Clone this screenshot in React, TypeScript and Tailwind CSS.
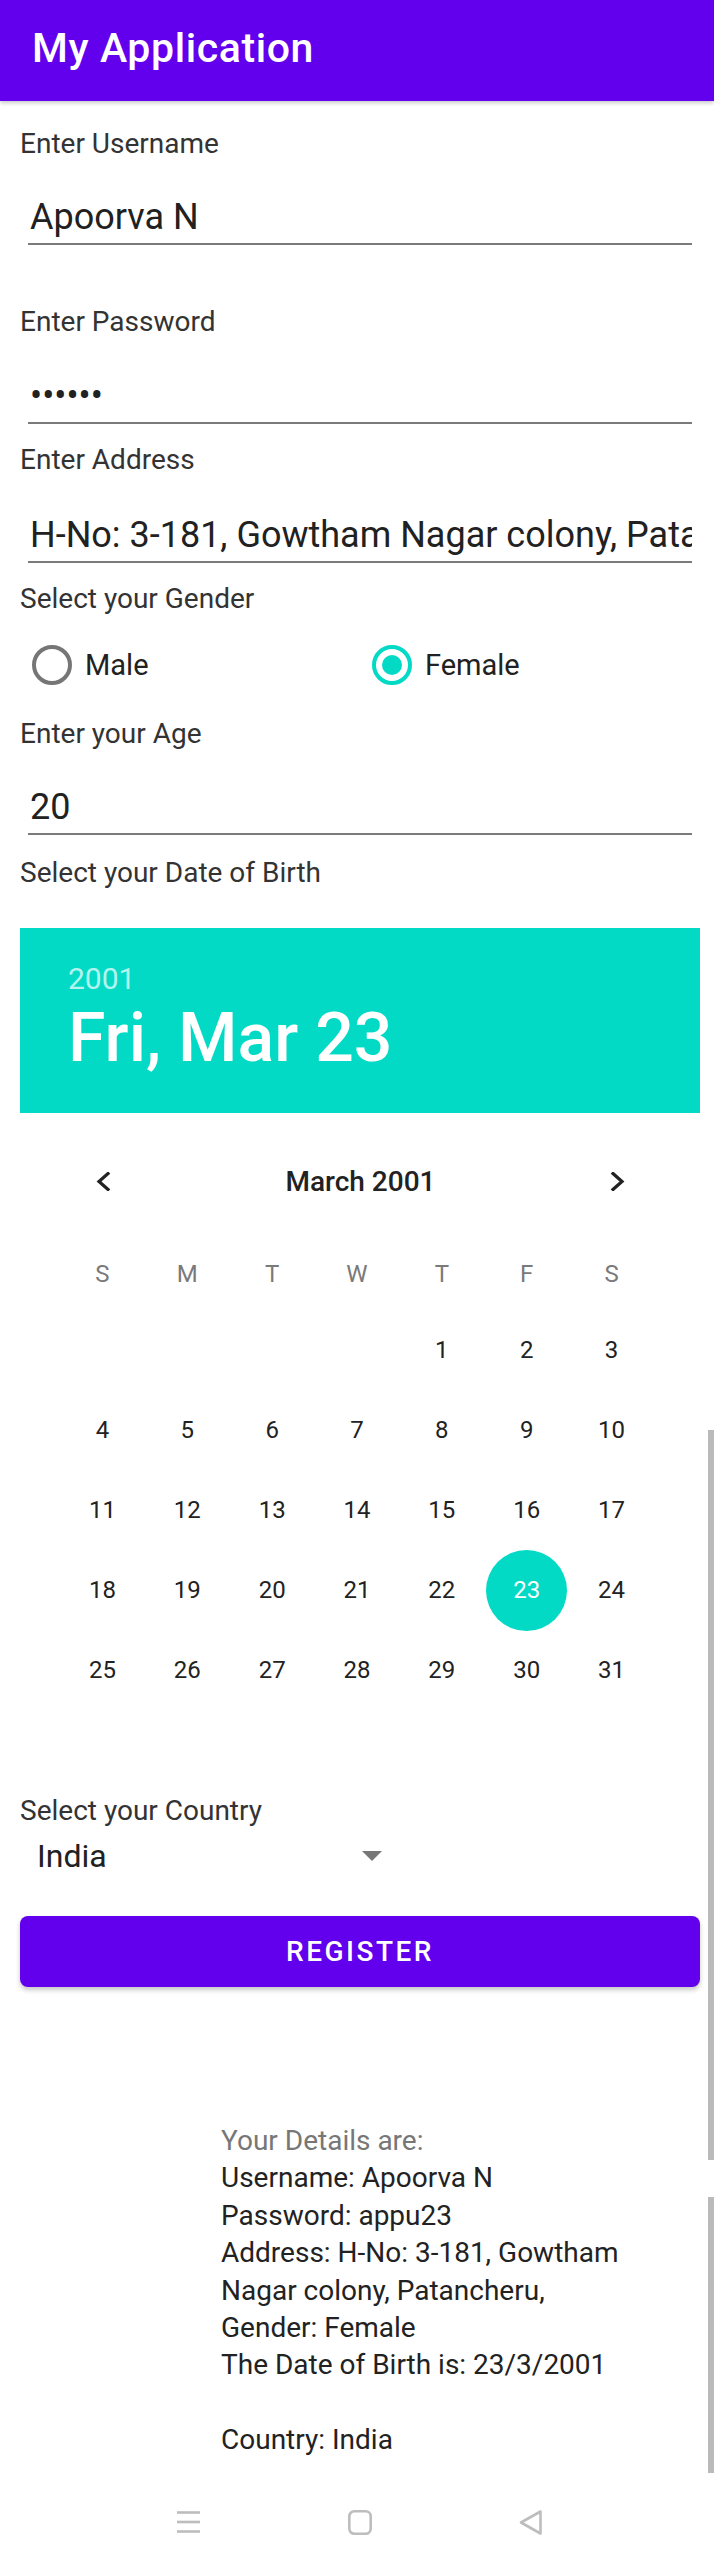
import React from "react";

const Label = ({ children, className = "" }: { children: React.ReactNode; className?: string }) => (
  <div className={`ml-[20px] text-[28px] leading-[33px] text-[#333333] ${className}`}>{children}</div>
);

const Input = ({ children, className = "" }: { children: React.ReactNode; className?: string }) => (
  <div className={`ml-[28px] w-[664px] overflow-hidden whitespace-nowrap border-b-2 border-[#7a7a7a] pb-[5px] ${className}`}>
    <div className="pl-[2px] text-[36px] leading-[42px] text-[#212121]">{children}</div>
  </div>
);

const Chevron = ({ dir }: { dir: "left" | "right" }) => (
  <svg width="16" height="19" viewBox="0 0 16 19" fill="none">
    <polyline
      points={dir === "left" ? "13,1.5 4,9.5 13,17.5" : "3,1.5 12,9.5 3,17.5"}
      stroke="#222222"
      strokeWidth="3.2"
      strokeLinecap="square"
      strokeLinejoin="miter"
    />
  </svg>
);

const weekdays = ["S", "M", "T", "W", "T", "F", "S"];
const days: (number | null)[] = [null, null, null, null, ...Array.from({ length: 31 }, (_, i) => i + 1)];
while (days.length % 7 !== 0) days.push(null);

export default function App() {
  return (
    <div className="relative flex h-[2562px] w-[714px] flex-col overflow-hidden bg-white font-['Roboto',sans-serif]">
      {/* App bar */}
      <div className="relative z-10 h-[101px] bg-[#6200EE] shadow-[0_2px_4px_rgba(0,0,0,0.22)]">
        <div className="pl-[32px] pt-[25px] text-[41px] font-medium leading-[47px] tracking-[0.6px] text-white">My Application</div>
      </div>

      <Label className="mt-[26px]">Enter Username</Label>
      <Input className="mt-[36px]">Apoorva N</Input>

      <Label className="mt-[60px]">Enter Password</Label>
      <Input className="mt-[37px]">••••••</Input>

      <Label className="mt-[19px]">Enter Address</Label>
      <Input className="mt-[38px]">H-No: 3-181, Gowtham Nagar colony, Patancheru,</Input>

      <Label className="mt-[19px]">Select your Gender</Label>
      <div className="ml-[20px] mt-[18px] grid h-[64px] w-[680px] grid-cols-2">
        <div className="flex items-center pl-[12px]">
          <div className="h-[40px] w-[40px] rounded-full border-[4px] border-[#767676]" />
          <span className="ml-[13px] text-[29px] leading-[34px] text-[#212121]">Male</span>
        </div>
        <div className="flex items-center pl-[12px]">
          <div className="flex h-[40px] w-[40px] items-center justify-center rounded-full border-[4px] border-[#03DAC5]">
            <div className="h-[20px] w-[20px] rounded-full bg-[#03DAC5]" />
          </div>
          <span className="ml-[13px] text-[29px] leading-[34px] text-[#212121]">Female</span>
        </div>
      </div>

      <Label className="mt-[20px]">Enter your Age</Label>
      <Input className="mt-[36px]">20</Input>

      <Label className="mt-[21px]">Select your Date of Birth</Label>

      {/* Date picker header */}
      <div className="ml-[20px] mt-[39px] h-[185px] w-[680px] bg-[#03DAC5] pl-[48px] pt-[33px]">
        <div className="text-[30px] leading-[35px] text-[#b3f4ee]">2001</div>
        <div className="mt-[2px] text-[68px] font-medium leading-[80px] text-white">Fri, Mar 23</div>
      </div>

      {/* Month row */}
      <div className="mt-[44px] flex h-[48px] items-center">
        <div className="ml-[95px]">
          <Chevron dir="left" />
        </div>
        <div className="flex-1 text-center text-[28px] font-medium leading-[33px] text-[#222222]">March 2001</div>
        <div className="mr-[88px]">
          <Chevron dir="right" />
        </div>
      </div>

      {/* Weekdays */}
      <div className="ml-[60px] mt-[45px] grid h-[47px] w-[594px] grid-cols-7">
        {weekdays.map((d, i) => (
          <div key={i} className="flex items-center justify-center text-[24px] leading-[28px] text-[#7a7a7a]">
            {d}
          </div>
        ))}
      </div>

      {/* Days */}
      <div className="ml-[60px] mt-[13px] grid w-[594px] grid-cols-7">
        {days.map((d, i) => (
          <div key={i} className="flex h-[80px] items-center justify-center">
            {d === 23 ? (
              <div className="flex h-[81px] w-[81px] shrink-0 items-center justify-center rounded-full bg-[#03DAC5] text-[24px] leading-[28px] text-white">
                23
              </div>
            ) : d ? (
              <span className="text-[24px] leading-[28px] text-[#222222]">{d}</span>
            ) : null}
          </div>
        ))}
      </div>

      <Label className="mt-[84px]">Select your Country</Label>
      <div className="ml-[20px] mt-[10px] flex h-[38px] w-[386px] items-center">
        <span className="pl-[17px] text-[32px] leading-[38px] text-[#212121]">India</span>
        <svg className="ml-auto mr-[24px]" width="20" height="10" viewBox="0 0 20 10">
          <polygon points="0,0 20,0 10,10" fill="#777777" />
        </svg>
      </div>

      <div className="ml-[20px] mt-[41px] flex h-[71px] w-[680px] items-center justify-center rounded-[8px] bg-[#6200EE] shadow-[0_3px_5px_rgba(0,0,0,0.22)]">
        <span className="text-[28px] font-medium leading-[33px] tracking-[2.5px] text-white">REGISTER</span>
      </div>

      {/* Details */}
      <div className="ml-[221px] mt-[135px] text-[28px] leading-[37.4px] text-[#222222]">
        <div className="text-[#777777]">Your Details are:</div>
        <div>Username: Apoorva N</div>
        <div>Password: appu23</div>
        <div>Address: H-No: 3-181, Gowtham</div>
        <div>Nagar colony, Patancheru,</div>
        <div>Gender: Female</div>
        <div>The Date of Birth is: 23/3/2001</div>
        <div>&nbsp;</div>
        <div>Country: India</div>
      </div>

      {/* Navigation bar */}
      <div className="mt-auto flex h-[80px] items-center pl-[177px]">
        <svg width="23" height="22" viewBox="0 0 23 22" fill="none">
          <line x1="0" y1="1.5" x2="23" y2="1.5" stroke="#bdbdbd" strokeWidth="2.6" />
          <line x1="0" y1="11" x2="23" y2="11" stroke="#bdbdbd" strokeWidth="2.6" />
          <line x1="0" y1="20.5" x2="23" y2="20.5" stroke="#bdbdbd" strokeWidth="2.6" />
        </svg>
        <svg className="ml-[148px]" width="24" height="25" viewBox="0 0 24 25" fill="none">
          <rect x="1.3" y="1.3" width="21.4" height="22.4" rx="5" stroke="#bdbdbd" strokeWidth="2.6" />
        </svg>
        <svg className="ml-[146px]" width="25" height="27" viewBox="0 0 25 27" fill="none">
          <path d="M22.5 2.5 L3 13.5 L22.5 24.5 Z" stroke="#bdbdbd" strokeWidth="2.6" strokeLinejoin="round" />
        </svg>
      </div>

      {/* Scrollbars (overlay) */}
      <div className="absolute right-0 top-[1430px] h-[730px] w-[6px] bg-[#bababa]" />
      <div className="absolute right-0 top-[2197px] h-[276px] w-[6px] bg-[#bababa]" />
    </div>
  );
}
